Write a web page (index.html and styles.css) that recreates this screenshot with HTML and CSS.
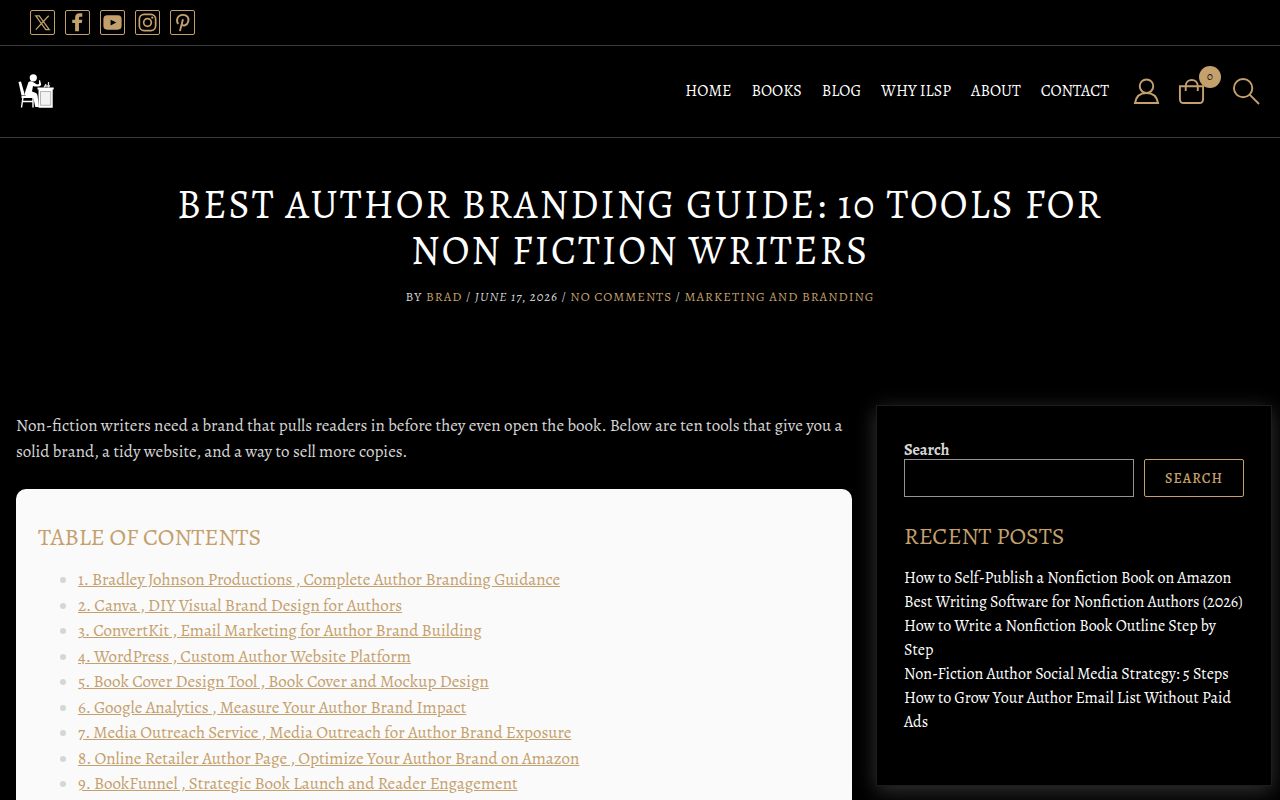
FILE: index.html
```html
<!DOCTYPE html>
<html lang="en">
<head>
  <meta charset="UTF-8" />
  <meta name="viewport" content="width=device-width, initial-scale=1.0"/>
  <title>Best Author Branding Guide: 10 Tools for Non Fiction Writers</title>
  <link rel="stylesheet" href="styles.css">
</head>
<body>

  <div class="topbar">
    <a href="#" class="social" aria-label="X">
      <svg viewBox="0 0 24 24"><path d="M5 5h3.600L19 19.500h-3.600z M18.500 5L5 19.500" fill="none" stroke="currentColor" stroke-width="1.300"/></svg>
    </a>
    <a href="#" class="social" aria-label="Facebook">
      <svg viewBox="0 0 24 24"><path d="M9.500 21v-8.500H6.500V9h3V7c0-3 1.600-4.700 4.500-4.700h3V6h-1.800c-1.200 0-1.700.5-1.700 1.500V9h3.500l-.5 3.500h-3V21z" fill="currentColor"/></svg>
    </a>
    <a href="#" class="social" aria-label="YouTube">
      <svg viewBox="0 0 24 24"><path fill-rule="evenodd" d="M6.500 4.500h11q4 0 4 4v7q0 4-4 4h-11q-4 0-4-4v-7q0-4 4-4zm3.500 4.500v6l6-3z" fill="currentColor"/></svg>
    </a>
    <a href="#" class="social" aria-label="Instagram">
      <svg viewBox="0 0 24 24"><g fill="none" stroke="currentColor" stroke-width="1.800"><rect x="3.500" y="3.500" width="17" height="17" rx="5"/><circle cx="12" cy="12" r="4"/></g><circle cx="17" cy="7" r="1.200" fill="currentColor"/></svg>
    </a>
    <a href="#" class="social" aria-label="Pinterest">
      <svg viewBox="0 0 24 24"><path d="M7.500 13.500C5 10 6.500 4 12.500 4c4.500 0 6.500 3.500 5.500 7-1 4-5.500 5.500-7.300 2.500M12.500 8.500L9.300 21" fill="none" stroke="currentColor" stroke-width="2"/></svg>
    </a>
  </div>

  <header class="header">
    <a href="#" class="logo" aria-label="Home">
      <svg viewBox="0 0 36 36">
        <g fill="#fff">
          <circle cx="15.300" cy="4.800" r="3.600"/>
          <path d="M.5 9L3 8.500l4 14H3.500z"/>
          <path d="M10.500 9q2.500-1.500 4.500 0l4 2.500 2-.5 0-3.500 1-.5 1.200 4.500q-.5 2-2.500 2h-4l-1.700-.5-1 5.500 4 1.500q1.500 1 1.600 3l1.300 11h-3.600l-2-9.500-7-1q-2-1-1.500-3.500z"/>
          <path d="M3.500 23H16v2H3.500z"/>
        </g>
        <path d="M5 24L3.500 34.500M15 24v10.500M4.500 28.500H15" fill="none" stroke="#fff" stroke-width="1.400"/>
        <path d="M19.500 14.500h16.200v2H19.500zM20.500 16h14.200v18.800H20.500z" fill="#fff"/>
        <path d="M22.500 18.500h10.200v13.800H22.500z" fill="#f2f2f2" stroke="#999" stroke-width=".7"/>
        <path d="M26 14.500l2-3.500M30.500 9v5.500M27 13h5" stroke="#ddd" stroke-width="1.300"/>
      </svg>
    </a>
    <nav class="nav">
      <a href="#">Home</a>
      <a href="#">Books</a>
      <a href="#">Blog</a>
      <a href="#">Why ILSP</a>
      <a href="#">About</a>
      <a href="#">Contact</a>
    </nav>
    <div class="tools">
      <a href="#" aria-label="Account">
        <svg viewBox="0 0 28 28"><circle cx="14" cy="8.500" r="7"/><path d="M2 26c1-6 5-10.500 12-10.500S25 20 26 26z"/></svg>
      </a>
      <a href="#" class="cart" aria-label="Cart">
        <svg viewBox="0 0 28 28"><path d="M2 8.500h24V22q0 4-4 4H6q-4 0-4-4z"/><path d="M8 13.500V8.500C8 0 20.500 0 20.500 8.500V13.500"/></svg>
        <span class="badge">0</span>
      </a>
      <a href="#" class="find" aria-label="Search">
        <svg viewBox="0 0 28 28"><circle cx="10.500" cy="10.500" r="9.500"/><path d="M17 17L27 27"/></svg>
      </a>
    </div>
  </header>

  <section class="hero">
    <h1>Best Author Branding Guide: 10 Tools for Non Fiction Writers</h1>
    <p class="meta">By <a href="#">Brad</a> / <em>June 17, 2026</em> / <a href="#">No Comments</a> / <a href="#">Marketing and Branding</a></p>
  </section>

  <div class="content">
    <main class="article">
      <p>Non-fiction writers need a brand that pulls readers in before they even open the book. Below are ten tools that give you a solid brand, a tidy website, and a way to sell more copies.</p>
      <div class="toc">
        <h2>Table of Contents</h2>
        <ul>
          <li><a href="#">1. Bradley Johnson Productions , Complete Author Branding Guidance</a></li>
          <li><a href="#">2. Canva , DIY Visual Brand Design for Authors</a></li>
          <li><a href="#">3. ConvertKit , Email Marketing for Author Brand Building</a></li>
          <li><a href="#">4. WordPress , Custom Author Website Platform</a></li>
          <li><a href="#">5. Book Cover Design Tool , Book Cover and Mockup Design</a></li>
          <li><a href="#">6. Google Analytics , Measure Your Author Brand Impact</a></li>
          <li><a href="#">7. Media Outreach Service , Media Outreach for Author Brand Exposure</a></li>
          <li><a href="#">8. Online Retailer Author Page , Optimize Your Author Brand on Amazon</a></li>
          <li><a href="#">9. BookFunnel , Strategic Book Launch and Reader Engagement</a></li>
        </ul>
      </div>
    </main>

    <aside class="sidebar">
      <form>
        <label for="search">Search</label>
        <div class="search-row">
          <input type="search" id="search">
          <button type="submit">Search</button>
        </div>
      </form>
      <h2>Recent Posts</h2>
      <ul class="posts">
        <li><a href="#">How to Self-Publish a Nonfiction Book on Amazon</a></li>
        <li><a href="#">Best Writing Software for Nonfiction Authors (2026)</a></li>
        <li><a href="#">How to Write a Nonfiction Book Outline Step by Step</a></li>
        <li><a href="#">Non-Fiction Author Social Media Strategy: 5 Steps</a></li>
        <li><a href="#">How to Grow Your Author Email List Without Paid Ads</a></li>
      </ul>
    </aside>
  </div>

</body>
</html>
```
FILE: styles.css
```css
* {
  box-sizing: border-box;
  margin: 0;
  padding: 0;
}
body {
  background: #000;
  color: #d6d6d6;
  font-family: Alegreya, "Liberation Serif", serif;
  font-size: 16px;
  line-height: 24px;
}
a {
  color: #c4a06c;
  text-decoration: none;
}
ul {
  list-style: none;
}
svg {
  display: block;
}

/* Top bar */
.topbar {
  display: flex;
  gap: 10px;
  padding: 10px 30px;
  border-bottom: 1px solid #3a3a3a;
}
.social {
  width: 25px;
  height: 25px;
  border: 1px solid #c4a06c;
  border-radius: 2px;
}

/* Header */
.header {
  display: flex;
  align-items: center;
  padding: 27px 20px 28px 18px;
  border-bottom: 1px solid #3a3a3a;
}
.logo {
  width: 36px;
  margin-right: auto;
}
.nav {
  display: flex;
  gap: 20px;
}
.nav a {
  color: #fff;
  text-transform: uppercase;
}
.tools {
  display: flex;
  gap: 18px;
  margin-left: 24px;
}
.tools svg {
  width: 27px;
  height: 27px;
  fill: none;
  stroke: #c4a06c;
  stroke-width: 2;
}
.cart {
  position: relative;
}
.find {
  margin-left: 10px;
}
.badge {
  position: absolute;
  top: -12px;
  right: -16px;
  width: 22px;
  height: 22px;
  border-radius: 50%;
  background: #c4a06c;
  color: #000;
  font-size: 11px;
  line-height: 22px;
  text-align: center;
}

/* Page title */
.hero {
  max-width: 980px;
  margin: 0 auto;
  padding: 44px 20px 96px;
  text-align: center;
  text-transform: uppercase;
}
h1 {
  color: #fff;
  font-size: 40px;
  font-weight: 400;
  line-height: 46px;
  letter-spacing: 2px;
}
.meta {
  margin-top: 11px;
  font-size: 13px;
  letter-spacing: 1px;
}

/* Article and sidebar */
.content {
  display: grid;
  grid-template-columns: 1fr 396px;
  gap: 24px;
  align-items: start;
  padding: 0 8px 40px 16px;
}
.article {
  padding-top: 8px;
  font-size: 17px;
  line-height: 1.5;
}
h2 {
  color: #c4a06c;
  font-size: 24px;
  font-weight: 400;
  line-height: 30px;
  text-transform: uppercase;
}
.toc {
  margin-top: 25px;
  padding: 33px 22px 22px;
  border-radius: 10px;
  background: #fafafa;
}
.toc ul {
  margin-top: 15px;
  padding-left: 40px;
  list-style: disc;
}
.toc a {
  text-decoration: underline;
}
.sidebar {
  padding: 35px 27px 51px;
  border: 1px solid #1c1c1c;
  box-shadow: 0 5px 20px rgba(255, 255, 255, 0.2);
}
label {
  display: block;
  font-weight: 700;
  line-height: 18px;
}
.search-row {
  display: flex;
  gap: 10px;
}
input {
  flex: 1;
  min-width: 0;
  height: 38px;
  padding: 0 8px;
  border: 1px solid #949494;
  background: #000;
  color: #fff;
  font: inherit;
}
button {
  width: 100px;
  border: 1px solid #c4a06c;
  border-radius: 2px;
  background: #000;
  color: #c4a06c;
  font-family: inherit;
  font-size: 14px;
  font-weight: 500;
  letter-spacing: 1px;
  text-transform: uppercase;
  cursor: pointer;
}
.sidebar h2 {
  margin: 24px 0 15px;
}
.posts a {
  color: #fff;
}
```
